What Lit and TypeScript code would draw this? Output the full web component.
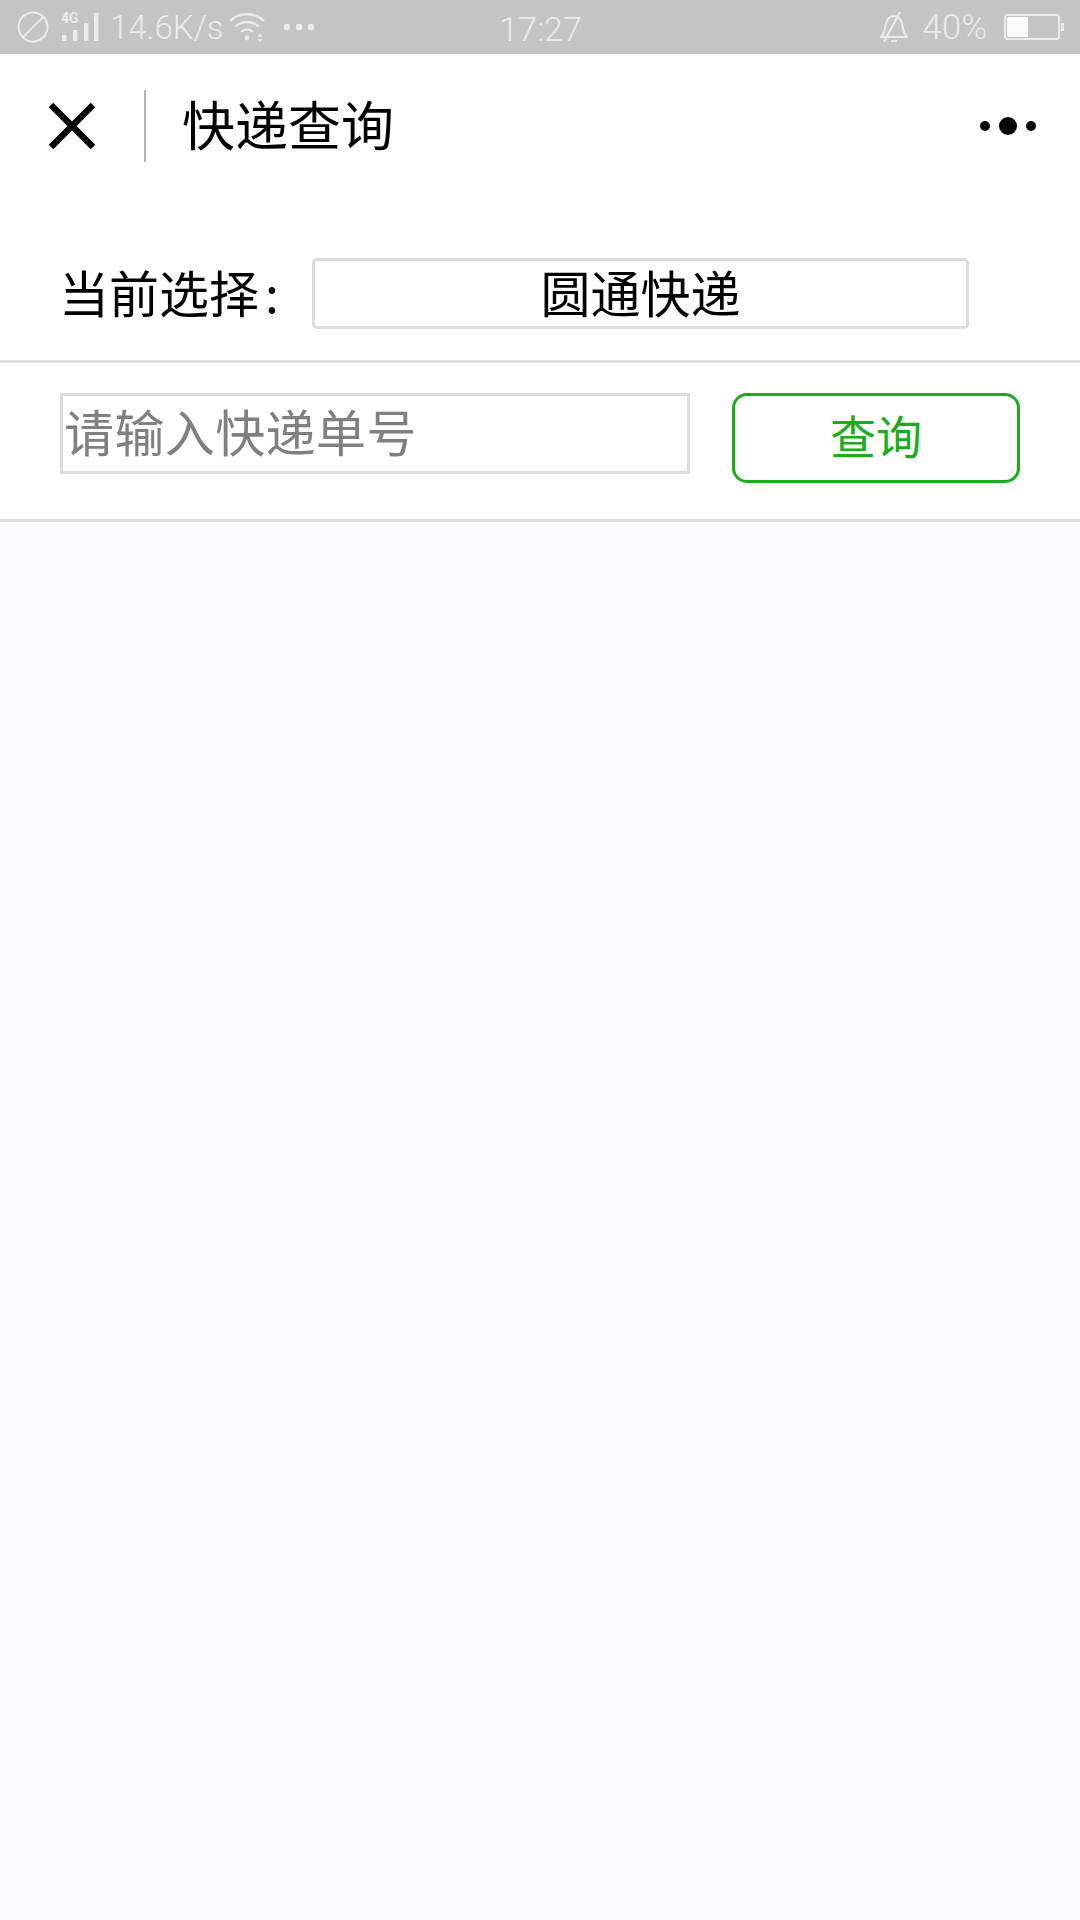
import { LitElement, css, html } from 'lit'
import { customElement } from 'lit/decorators.js'

@customElement('app-root')
export class AppRoot extends LitElement {
  static styles = css`
    :host {
      display: block;
      width: 1080px;
      height: 1920px;
      background: #faf9fe;
      font-family: 'Noto Sans CJK SC', 'Noto Sans', sans-serif;
      overflow: hidden;
    }
    .status {
      height: 54px;
      background: #c4c4c4;
      color: #ececec;
      font-family: Roboto, sans-serif;
      font-weight: 300;
      font-size: 33px;
      display: grid;
      grid-template-columns: 1fr auto 1fr;
      align-items: center;
      padding: 0 16px 0 17px;
      box-sizing: border-box;
    }
    .status-left,
    .status-right {
      display: flex;
      align-items: center;
    }
    .status-right {
      justify-content: flex-end;
    }
    .status svg {
      display: block;
      flex: none;
    }
    .net {
      margin: 0 9px 0 12px;
    }
    .speed {
      margin-right: 5px;
    }
    .wifi {
      margin-right: 16px;
    }
    .clock {
      font-size: 34px;
      padding-top: 4px;
    }
    .pct {
      font-size: 35px;
      margin: 0 17px 0 14px;
    }
    .nav {
      height: 144px;
      background: #fff;
      display: flex;
      align-items: center;
      padding: 0 44px 0 48px;
    }
    .close {
      display: block;
      margin-right: 48px;
    }
    .sep {
      width: 2px;
      height: 72px;
      background: #b4b4b4;
      margin-right: 36px;
    }
    .title {
      flex: 1;
      font-size: 53px;
      line-height: 66px;
      padding-bottom: 6px;
      color: #000;
    }
    .select-row {
      height: 165px;
      box-sizing: border-box;
      background: #fff;
      border-bottom: 3px solid #dedede;
      display: flex;
      align-items: flex-start;
      padding: 60px 0 0 59px;
    }
    .label {
      width: 253px;
      font-size: 50px;
      line-height: 67px;
      color: #000;
      white-space: nowrap;
    }
    .colon {
      padding-left: 6px;
    }
    .picker {
      width: 657px;
      height: 71px;
      box-sizing: border-box;
      border: 3px solid #dcdcdc;
      border-radius: 5px;
      font-size: 50px;
      line-height: 61px;
      text-align: center;
      color: #000;
    }
    .query-row {
      height: 159px;
      box-sizing: border-box;
      background: #fff;
      border-bottom: 3px solid #dedee2;
      display: flex;
      align-items: flex-start;
      padding: 30px 0 0 60px;
    }
    .input {
      width: 630px;
      height: 81px;
      box-sizing: border-box;
      border: 3px solid #dcdcdc;
      padding-left: 1px;
      font-size: 50px;
      letter-spacing: 0.4px;
      line-height: 68px;
      color: #808080;
      white-space: nowrap;
    }
    .btn {
      width: 288px;
      height: 90px;
      margin-left: 42px;
      box-sizing: border-box;
      border: 3px solid #1aad19;
      border-radius: 15px;
      background: #fff;
      color: #1aad19;
      font: inherit;
      font-size: 46px;
      line-height: 76px;
      padding: 0 0 8px;
    }
  `

  render() {
    return html`
      <div class="status">
        <div class="status-left">
          <svg width="32" height="32" viewBox="0 0 32 32" fill="none" stroke="#ececec" stroke-width="2">
            <circle cx="16" cy="16" r="14.500" />
            <path d="M6 26 26 6" />
          </svg>
          <svg class="net" width="40" height="32" viewBox="0 0 40 32" fill="#ececec">
            <text x="0" y="12" font-size="14" font-weight="700" font-family="Roboto, sans-serif">4G</text>
            <rect x="1" y="24" width="4.500" height="6" />
            <rect x="12" y="19" width="4.500" height="11" />
            <rect x="23" y="12" width="4.500" height="18" />
            <rect x="33" y="2" width="4.500" height="28" />
          </svg>
          <span class="speed">14.6K/s</span>
          <svg class="wifi" width="38" height="32" viewBox="0 0 38 32" fill="none" stroke="#ececec" stroke-width="2.400">
            <path d="M1 10C10 1 26 1 35 10" />
            <path d="M6.500 15.500C12.500 9.500 23.500 9.500 29.500 15.500" />
            <path d="M12 21C15.500 17.500 20.500 17.500 24 21" />
            <circle cx="18" cy="27" r="2.400" fill="#ececec" stroke="none" />
            <path d="M28 25.500h6l-3-3zM28 28h6l-3 3z" fill="#ececec" stroke="none" />
          </svg>
          <svg width="32" height="8" viewBox="0 0 32 8" fill="#ececec">
            <circle cx="4" cy="4" r="3.200" />
            <circle cx="16" cy="4" r="3.200" />
            <circle cx="28" cy="4" r="3.200" />
          </svg>
        </div>
        <div class="clock">17:27</div>
        <div class="status-right">
          <svg width="28" height="32" viewBox="0 0 28 32" fill="none" stroke="#ececec" stroke-width="2">
            <path d="M1 26C5 22 5 17 6 13 7 8 10 5 14 5 18 5 21 8 22 13 23 17 23 22 27 26Z" />
            <path d="M20 1 4 31" />
            <path d="M11 30h6" />
          </svg>
          <span class="pct">40%</span>
          <svg width="60" height="26" viewBox="0 0 60 26" fill="none">
            <rect x="1" y="1" width="54" height="24" rx="2.500" stroke="#ececec" stroke-width="2" />
            <rect x="3" y="3" width="21" height="20" fill="#fafafa" />
            <rect x="57" y="9" width="3" height="8" fill="#ececec" />
          </svg>
        </div>
      </div>
      <div class="nav">
        <svg class="close" width="48" height="48" viewBox="0 0 48 48" fill="none" stroke="#000" stroke-width="6.500">
          <path d="M3 3 45 45M45 3 3 45" />
        </svg>
        <div class="sep"></div>
        <div class="title">快递查询</div>
        <svg width="56" height="18" viewBox="0 0 56 18" fill="#000">
          <circle cx="5" cy="9" r="5" />
          <circle cx="28" cy="9" r="9" />
          <circle cx="51" cy="9" r="5" />
        </svg>
      </div>
      <div class="select-row">
        <div class="label">当前选择<span class="colon">:</span></div>
        <div class="picker">圆通快递</div>
      </div>
      <div class="query-row">
        <div class="input">请输入快递单号</div>
        <button class="btn">查询</button>
      </div>
    `
  }
}
